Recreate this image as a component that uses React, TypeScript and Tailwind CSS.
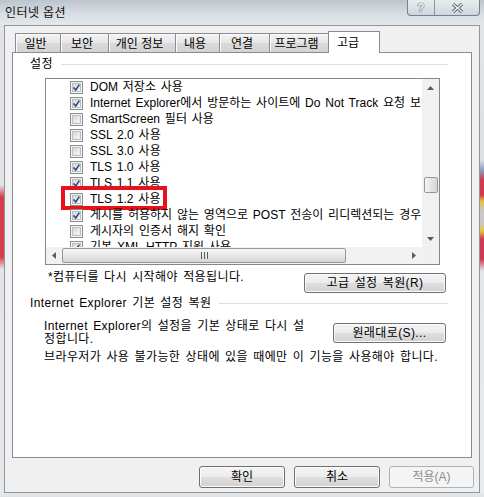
import React from 'react';

type Item = { label: string; checked: boolean; mark?: boolean };

const items: Item[] = [
  { label: 'DOM 저장소 사용', checked: true },
  { label: 'Internet Explorer에서 방문하는 사이트에 Do Not Track 요청 보내기', checked: true },
  { label: 'SmartScreen 필터 사용', checked: false },
  { label: 'SSL 2.0 사용', checked: false },
  { label: 'SSL 3.0 사용', checked: false },
  { label: 'TLS 1.0 사용', checked: true },
  { label: 'TLS 1.1 사용', checked: true },
  { label: 'TLS 1.2 사용', checked: true, mark: true },
  { label: '게시를 허용하지 않는 영역으로 POST 전송이 리디렉션되는 경우 경고', checked: true },
  { label: '게시자의 인증서 해지 확인', checked: false },
  { label: '기본 XML HTTP 지원 사용', checked: true },
];

const tabs = [
  { label: '일반', w: 'w-[45px]' },
  { label: '보안', w: 'w-[48px]' },
  { label: '개인 정보', w: 'w-[67px]' },
  { label: '내용', w: 'w-[44px]' },
  { label: '연결', w: 'w-[50px]' },
  { label: '프로그램', w: 'w-[59px]' },
];

const Check: React.FC<{ checked: boolean }> = ({ checked }) => (
  <div className="h-[13px] w-[13px] shrink-0 border border-[#8e8f8f] bg-[#f4f4f4] p-px">
    <div className="relative h-full w-full border border-[#b9bdc4] bg-[linear-gradient(135deg,#d4d8de,#f6f6f6)]">
      {checked && (
        <svg viewBox="0 0 7 7" className="absolute inset-0 h-full w-full overflow-visible">
          <path d="M0.6 3.4 L2.7 5.9 L6.4 0.6" fill="none" stroke="#2f4679" strokeWidth="1.6" />
        </svg>
      )}
    </div>
  </div>
);

const WinButton: React.FC<{ children: React.ReactNode; className?: string; disabled?: boolean }> = ({
  children,
  className = '',
  disabled,
}) =>
  disabled ? (
    <div
      className={`flex items-center justify-center rounded-[3px] border border-[#adb2b5] bg-[#f4f4f4] text-[12px] leading-none text-[#8d8d8d] ${className}`}
    >
      {children}
    </div>
  ) : (
    <div
      className={`flex items-center justify-center rounded-[3px] border border-[#707070] bg-[linear-gradient(to_bottom,#f4f4f4_0%,#ececec_50%,#dfdfdf_50%,#d2d2d2_100%)] text-[12px] leading-none text-black shadow-[inset_0_0_0_1px_#fbfbfb] ${className}`}
    >
      {children}
    </div>
  );

const Arrow: React.FC<{ dir: 'up' | 'down' | 'left' | 'right' }> = ({ dir }) => {
  const pts = {
    up: '0,4 3.5,0 7,4',
    down: '0,0 3.5,4 7,0',
    left: '4,0 0,3.5 4,7',
    right: '0,0 4,3.5 0,7',
  }[dir];
  const vert = dir === 'up' || dir === 'down';
  return (
    <svg width={vert ? 7 : 4} height={vert ? 4 : 7} viewBox={vert ? '0 0 7 4' : '0 0 4 7'}>
      <polygon points={pts} fill="#5a5a5a" />
    </svg>
  );
};

const GroupHeader: React.FC<{ label: string; className?: string }> = ({ label, className = '' }) => (
  <div className={`ml-[17px] mr-[23px] flex h-[14px] items-center gap-[8px] ${className}`}>
    <span className="whitespace-nowrap text-[12px] leading-[14px] tracking-[0.4px] [word-spacing:1.5px]">{label}</span>
    <div className="h-px flex-1 bg-[#d5dfe5]" />
  </div>
);

export default function App() {
  return (
    <div className="flex h-[497px] w-[484px] flex-col overflow-hidden bg-[#e3e7eb] font-['Liberation_Sans','Noto_Sans_CJK_KR',sans-serif] text-black">
      {/* title bar */}
      <div className="flex h-[25px] shrink-0 items-start justify-between bg-[linear-gradient(to_bottom,#bcc4cc,#d9dee3_55%,#e4e8eb)]">
        <span className="pl-[5px] pt-[6px] text-[12px] leading-[14px] tracking-[0.4px] text-[#111]">인터넷 옵션</span>
        <div className="mr-[4px] flex h-[16px] w-[73px] overflow-hidden rounded-b-[4px] border border-t-0 border-[#75818e] bg-[linear-gradient(to_bottom,#e9ecef,#cfd6dd)]">
          <div className="flex w-[27px] items-center justify-center border-r border-[#8b96a2] text-[12px] font-bold leading-none text-[#f5f5f5] [text-shadow:0_0_1px_#3c4650,0_0_1px_#3c4650]">
            ?
          </div>
          <div className="flex flex-1 items-center justify-center">
            <svg width="13" height="10" viewBox="0 0 13 10">
              <path d="M2 1 L11 9 M11 1 L2 9" stroke="#55606b" strokeWidth="3.2" />
              <path d="M2 1 L11 9 M11 1 L2 9" stroke="#f4f4f4" strokeWidth="1.4" />
            </svg>
          </div>
        </div>
      </div>

      <div className="flex h-[468px] shrink-0">
        <div className="w-[4px] bg-[linear-gradient(to_bottom,#dfe3e7_0px,#e1e5e9_160px,#d23f4b_172px,#d43e4a_232px,#e1e5e9_244px,#e6e9ec_100%)]" />

        {/* dialog body */}
        <div className="flex w-[476px] flex-col border border-[#8f969d] bg-[#f0f0f0]">
          {/* tab strip */}
          <div className="relative z-10 ml-[10px] mt-[5px] flex h-[21px] items-end">
            {tabs.map((t) => (
              <div
                key={t.label}
                className={`flex h-[19px] ${t.w} items-center justify-center border-l border-t border-[#898c95] bg-[linear-gradient(to_bottom,#f3f3f3,#e6e6e6_50%,#dadada_50%,#d3d3d3)] pr-[5px] pt-px text-[12px] leading-none shadow-[inset_1px_1px_0_#fcfcfc]`}
              >
                {t.label}
              </div>
            ))}
            <div className="-mb-px flex h-[22px] w-[52px] items-center border border-b-0 border-[#898c95] bg-white pl-[8px] text-[12px] leading-none">
              고급
            </div>
          </div>

          {/* tab page */}
          <div className="ml-[7px] flex h-[406px] w-[460px] flex-col border border-[#898c95] bg-white">
            <GroupHeader label="설정" className="mt-[4px]" />

            {/* list box */}
            <div className="ml-[32px] mt-[7px] flex h-[187px] w-[395px] flex-col border border-[#828790] bg-white">
              <div className="flex h-[168px]">
                <div className="w-[376px] overflow-hidden">
                  {items.map((it) => (
                    <div key={it.label} className="relative flex h-[16px] items-center whitespace-nowrap pl-[24px]">
                      <Check checked={it.checked} />
                      <span className="pl-[7px] text-[12px] leading-[16px] [word-spacing:1.5px]">{it.label}</span>
                      {it.mark && (
                        <div className="absolute left-[15px] top-[-5px] h-[24px] w-[106px] border-[4px] border-[#e8121a]" />
                      )}
                    </div>
                  ))}
                </div>
                {/* vertical scrollbar */}
                <div className="flex w-[17px] flex-col bg-[#f1f1f1]">
                  <div className="flex h-[17px] items-center justify-center">
                    <Arrow dir="up" />
                  </div>
                  <div className="flex-1">
                    <div className="ml-[2px] mt-[81px] h-[16px] w-[14px] rounded-[2px] border border-[#989898] bg-[linear-gradient(to_right,#f6f6f6,#e4e4e4_50%,#d6d6d6)]" />
                  </div>
                  <div className="flex h-[17px] items-center justify-center">
                    <Arrow dir="down" />
                  </div>
                </div>
              </div>
              {/* horizontal scrollbar */}
              <div className="flex h-[17px]">
                <div className="flex w-[376px] bg-[#f1f1f1]">
                  <div className="flex w-[16px] items-center justify-center">
                    <Arrow dir="left" />
                  </div>
                  <div className="flex-1">
                    <div className="mt-px flex h-[15px] w-[284px] items-center justify-center gap-[2px] rounded-[2px] border border-[#989898] bg-[linear-gradient(to_bottom,#f6f6f6,#e6e6e6_50%,#d6d6d6)]">
                      <div className="h-[7px] w-px bg-[#5d5d5d]" />
                      <div className="h-[7px] w-px bg-[#5d5d5d]" />
                      <div className="h-[7px] w-px bg-[#5d5d5d]" />
                    </div>
                  </div>
                  <div className="flex w-[17px] items-center justify-center">
                    <Arrow dir="right" />
                  </div>
                </div>
                <div className="w-[17px] bg-[#f0f0f0]" />
              </div>
            </div>

            {/* restart notice + reset advanced */}
            <div className="ml-[35px] mr-[25px] mt-[5px] flex items-start justify-between">
              <span className="text-[12px] leading-[14px] tracking-[0.4px] [word-spacing:1.5px]">
                *컴퓨터를 다시 시작해야 적용됩니다.
              </span>
              <WinButton className="mt-[3px] h-[20px] w-[142px] tracking-[0.4px] [word-spacing:1.5px]">
                고급 설정 복원(R)
              </WinButton>
            </div>

            <GroupHeader label="Internet Explorer 기본 설정 복원" className="mt-[3px]" />

            <div className="ml-[31px] mr-[25px] mt-[10px] flex items-start justify-between">
              <p className="text-[12px] leading-[13px] tracking-[0.4px] [word-spacing:1.5px]">
                Internet Explorer의 설정을 기본 상태로 다시 설
                <br />
                정합니다.
              </p>
              <WinButton className="mt-[3px] h-[20px] w-[113px] tracking-[0.4px]">원래대로(S)...</WinButton>
            </div>

            <p className="ml-[31px] mt-[5px] whitespace-nowrap text-[12px] leading-[13px] tracking-[0.4px] [word-spacing:1.5px]">
              브라우저가 사용 불가능한 상태에 있을 때에만 이 기능을 사용해야 합니다.
            </p>
          </div>

          {/* dialog buttons */}
          <div className="mt-[8px] flex justify-end gap-[9px] pr-[5px]">
            <WinButton className="h-[22px] w-[86px]">확인</WinButton>
            <WinButton className="h-[22px] w-[86px]">취소</WinButton>
            <WinButton disabled className="h-[22px] w-[85px]">
              적용(A)
            </WinButton>
          </div>
        </div>

        <div className="w-[4px] bg-[linear-gradient(to_bottom,#e2e5e8_0px,#dde0e3_135px,#8aa0c0_145px,#cf3b4e_155px,#d23a4c_170px,#e0c040_176px,#c9c9c9_186px,#c8c8c8_198px,#e2c63c_206px,#d23a58_214px,#cc3a52_234px,#e3e6e9_246px,#e9ebee_100%)]" />
      </div>
      <div className="flex-1 bg-[linear-gradient(to_bottom,#e6e9ec,#dfe3e6)]" />
    </div>
  );
}
